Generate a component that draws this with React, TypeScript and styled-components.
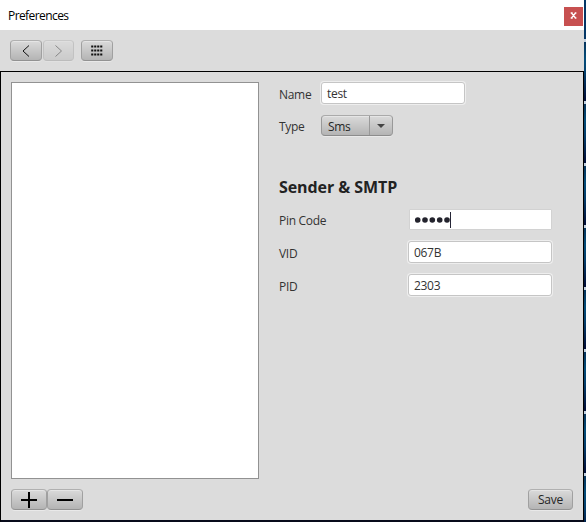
import React from "react";
import styled, { createGlobalStyle } from "styled-components";

const GlobalStyle = createGlobalStyle`
  * { box-sizing: border-box; }
  body {
    margin: 0;
    overflow: hidden;
    font: 12px/16px "Open Sans", "Noto Sans", sans-serif;
    color: #333;
  }
`;

const Screen = styled.div`
  display: grid;
  grid-template-columns: 584px 2px;
  width: 586px;
  height: 522px;
`;

const Window = styled.main`
  display: flex;
  flex-direction: column;
  height: 522px;
  background: #dcdcdc;
`;

const Desktop = styled.div`
  background: repeating-linear-gradient(
    to bottom,
    #c2d0df 0, #c2d0df 3px,
    #07345c 3px, #044d7a 20px, #043f6d 35px, #020f39 60px, #020f39 62px
  );
  background-position: 0 39px;
  background-repeat: no-repeat;
  background-color: #053766;
`;

const TitleBar = styled.header`
  display: flex;
  justify-content: space-between;
  height: 30px;
  padding: 7px 1px 0 8px;
  background: #fff;
  color: #000;
`;

const Title = styled.span`
  padding-top: 1px;
  letter-spacing: -0.58px;
`;

const CloseButton = styled.button`
  display: grid;
  place-items: center;
  width: 19px;
  height: 19px;
  padding: 0 0 2px;
  border: 0;
  background: #c75050;
`;

const Toolbar = styled.nav`
  display: flex;
  height: 41px;
  padding: 10px 10px 0;
`;

const Button = styled.button<{ $width: number; $gap?: number; $muted?: boolean }>`
  display: flex;
  flex: none;
  align-items: center;
  justify-content: center;
  width: ${(p) => p.$width}px;
  height: 21px;
  margin: 0 ${(p) => p.$gap ?? 0}px 0 0;
  padding: 0;
  border: 1px solid #999;
  border-color: #b0b0b0 #a0a0a0 #929292;
  border-radius: 4px;
  background: linear-gradient(#dadada, #b4b4b4);
  box-shadow: inset 0 1px #e5e5e5, 0 1px #e9e9e9;
  color: #252525;
  font: inherit;
  opacity: ${(p) => (p.$muted ? 0.42 : 1)};
`;

const Body = styled.section`
  display: grid;
  grid-template-columns: 248px 1fr;
  grid-template-rows: 397px 1fr;
  column-gap: 20px;
  height: 451px;
  padding: 10px 10px 0;
  border: 1px solid #000;
  border-bottom: 2px solid #080b1b;
`;

const List = styled.div`
  border: 1px solid #929292;
  background: #fff;
`;

const Form = styled.form`
  display: flex;
  flex-direction: column;
`;

const Field = styled.label<{ $label: number; $height: number }>`
  display: grid;
  grid-template-columns: ${(p) => p.$label}px 1fr;
  align-items: start;
  height: ${(p) => p.$height}px;
`;

const Label = styled.span`
  padding-top: 5px;
  letter-spacing: -0.3px;
`;

const Input = styled.div<{ $focused?: boolean }>`
  display: flex;
  align-items: center;
  width: ${(p) => (p.$focused ? 143 : 144)}px;
  height: ${(p) => (p.$focused ? 21 : 22)}px;
  margin-top: ${(p) => (p.$focused ? 1 : 0)}px;
  padding: ${(p) => (p.$focused ? 0 : 1)}px 0 0 5px;
  border: 1px solid ${(p) => (p.$focused ? "#d2d2d2" : "#c5c5c5")};
  border-radius: ${(p) => (p.$focused ? 1 : 3)}px;
  background: #fff;
  box-shadow: ${(p) => (p.$focused ? "none" : "0 0 0 1px #eeeeee")};
  letter-spacing: -0.3px;
`;

const Combo = styled.div`
  display: grid;
  grid-template-columns: 47px 1fr;
  align-items: center;
  width: 72px;
  height: 21px;
  margin-top: 1px;
  border: 1px solid #979797;
  border-color: #aaa #999 #8c8c8c;
  border-radius: 4px;
  background: linear-gradient(#dadada, #b4b4b4);
  box-shadow: inset 0 1px #e5e5e5, 0 1px #e9e9e9;
`;

const ComboText = styled.span`
  padding: 2px 0 0 6px;
  color: #252525;
  letter-spacing: -0.4px;
`;

const ComboArrow = styled.span`
  display: grid;
  place-items: center;
  height: 19px;
  border-left: 1px solid #999;
`;

const Heading = styled.h2`
  height: 32px;
  margin: 0;
  color: #222;
  font-size: 16px;
  line-height: 22px;
  letter-spacing: -0.08px;
`;

const Caret = styled.i`
  width: 1px;
  height: 16px;
  background: #252536;
`;

const Actions = styled.footer`
  display: flex;
  padding-top: 10px;
`;

const SaveArea = styled(Actions)`
  justify-content: flex-end;
`;

const SaveText = styled.span`
  letter-spacing: -0.25px;
`;

const Chevron = ({ right }: { right?: boolean }) => (
  <svg width="10" height="12" viewBox="0 0 10 12" fill="none" stroke="#111">
    <path d={right ? "M1.5 .5 7.5 6l-6 5.5" : "M8 .5 2 6l6 5.5"} />
  </svg>
);

const GridIcon = () => (
  <svg width="12" height="11" viewBox="0 0 12 11" fill="#111">
    {[0, 3, 6, 9].map((x) =>
      [0, 4, 8].map((y) => <rect key={`${x}-${y}`} x={x + 0.2} y={y + 0.5} width="2.1" height="2" />),
    )}
  </svg>
);

export default function App() {
  return (
    <>
      <GlobalStyle />
      <Screen>
        <Window>
          <TitleBar>
            <Title>Preferences</Title>
            <CloseButton aria-label="Close">
              <svg width="7" height="7" viewBox="0 0 7 7" stroke="#fff" strokeWidth="1.3">
                <path d="m1.5 1 4 5m0-5-4 5M.7 1h2m2 0h1.7M.7 6h2m2 0h1.7" />
              </svg>
            </CloseButton>
          </TitleBar>
          <Toolbar>
            <Button $width={32} $gap={1} aria-label="Back"><Chevron /></Button>
            <Button $width={31} $gap={7} $muted aria-label="Forward"><Chevron right /></Button>
            <Button $width={32} aria-label="Show all"><GridIcon /></Button>
          </Toolbar>
          <Body>
            <List />
            <Form>
              <Field $label={42} $height={32}>
                <Label>Name</Label>
                <Input>test</Input>
              </Field>
              <Field $label={42} $height={62}>
                <Label>Type</Label>
                <Combo>
                  <ComboText>Sms</ComboText>
                  <ComboArrow>
                    <svg width="8" height="4" viewBox="0 0 8 4"><path d="M0 0h8L4 4z" fill="#444" /></svg>
                  </ComboArrow>
                </Combo>
              </Field>
              <Heading>Sender &amp; SMTP</Heading>
              <Field $label={130} $height={33}>
                <Label>Pin Code</Label>
                <Input $focused>
                  <svg width="35" height="6" viewBox="0 0 35 6" fill="#23232d">
                    {[2.7, 10, 17.3, 24.7, 32].map((x) => <circle key={x} cx={x} cy="3" r="2.8" />)}
                  </svg>
                  <Caret />
                </Input>
              </Field>
              <Field $label={129} $height={33}>
                <Label>VID</Label>
                <Input>067B</Input>
              </Field>
              <Field $label={129} $height={33}>
                <Label>PID</Label>
                <Input>2303</Input>
              </Field>
            </Form>
            <Actions>
              <Button $width={36} aria-label="Add">
                <svg width="16" height="16" viewBox="0 0 16 16" stroke="#000" strokeWidth="2"><path d="M0 8h16M8 0v16" /></svg>
              </Button>
              <Button $width={36} aria-label="Remove">
                <svg width="16" height="16" viewBox="0 0 16 16" stroke="#000" strokeWidth="2"><path d="M0 8h16" /></svg>
              </Button>
            </Actions>
            <SaveArea>
              <Button $width={45}><SaveText>Save</SaveText></Button>
            </SaveArea>
          </Body>
        </Window>
        <Desktop />
      </Screen>
    </>
  );
}
